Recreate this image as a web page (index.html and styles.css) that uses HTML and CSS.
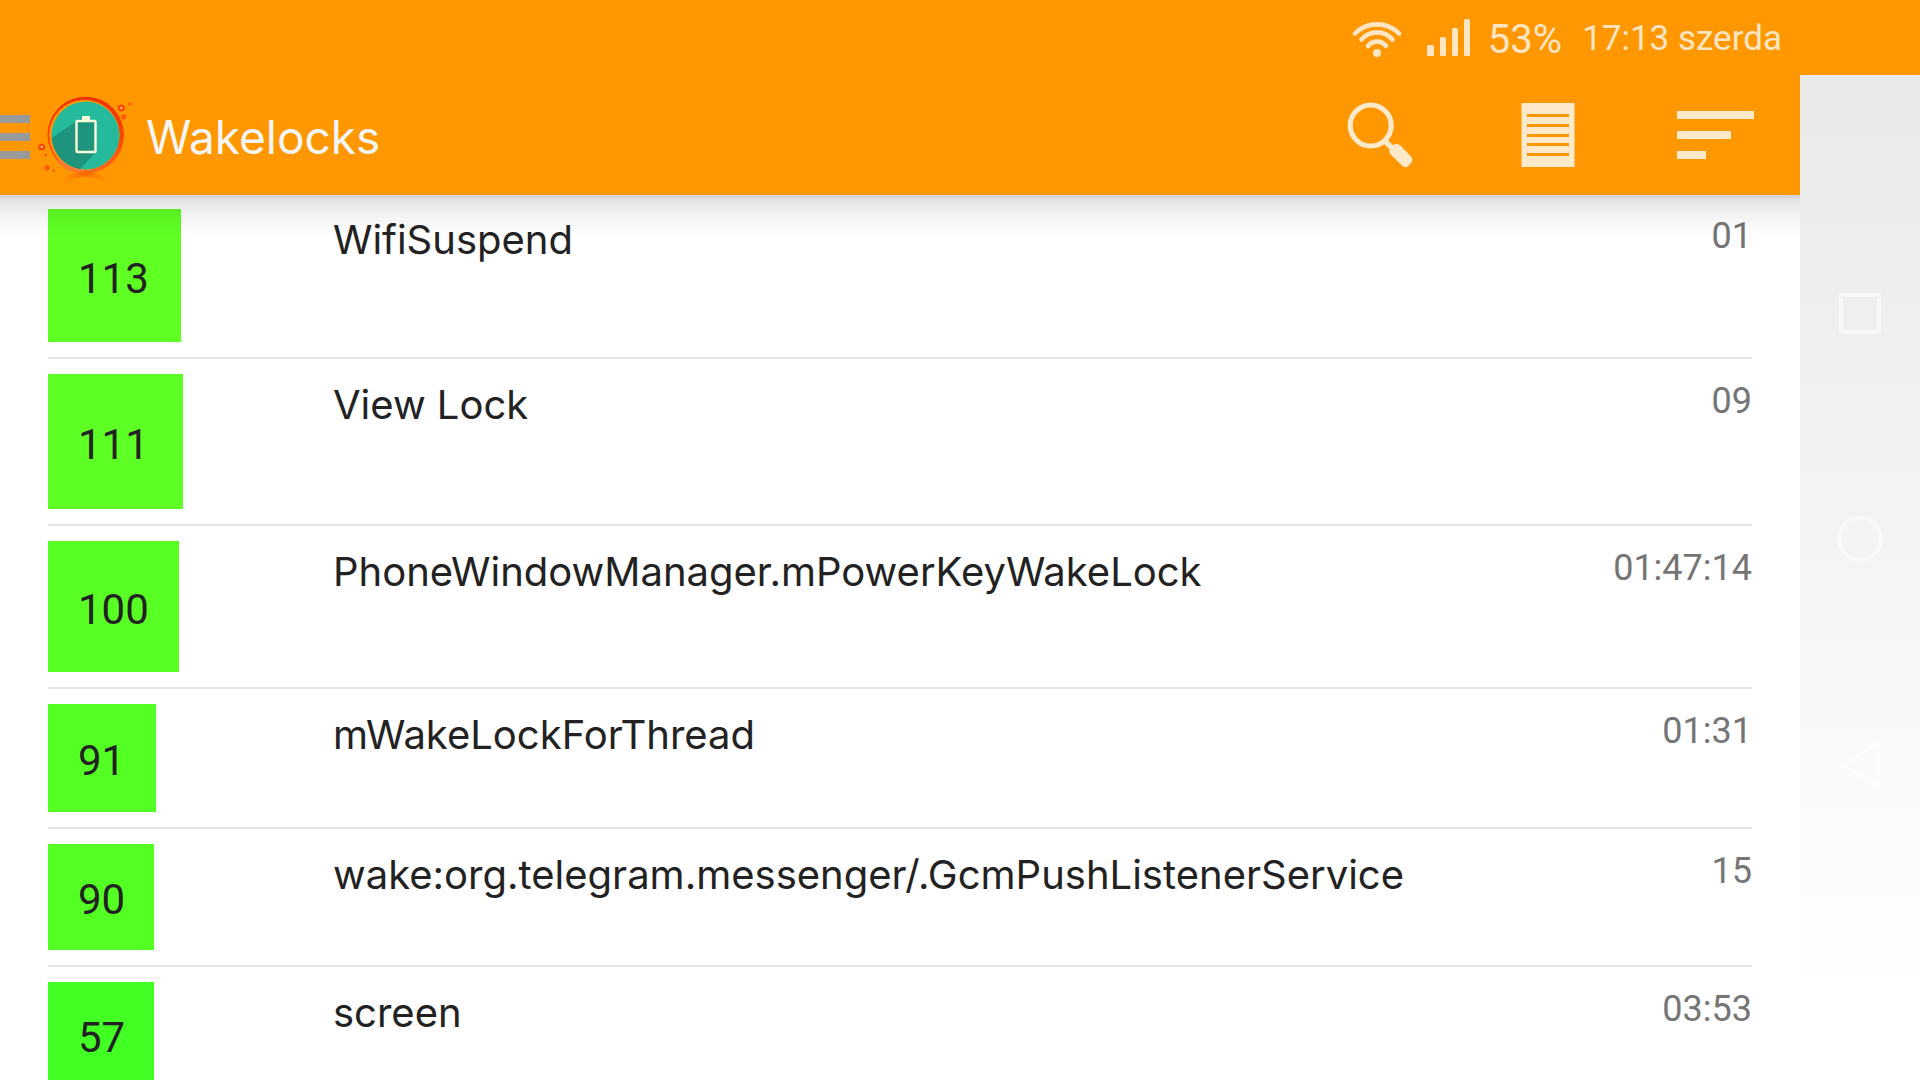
FILE: index.html
```
<!DOCTYPE html>
<html lang="en">
<head>
<meta charset="utf-8">
<meta name="viewport" content="width=device-width, initial-scale=1">
<title>Wakelocks</title>
<link rel="stylesheet" href="styles.css">
</head>
<body class="screen">
  <div class="status">
    <svg class="status-wifi" width="50" height="40" viewBox="0 0 50 40" aria-hidden="true">
      <g fill="none" stroke="currentColor" stroke-width="4.6" stroke-linecap="round">
        <path d="M3 15.500A31 31 0 0 1 47 15.500"/>
        <path d="M9.500 21.500A20.500 20.500 0 0 1 40.500 21.500"/>
        <path d="M16 28A11.500 11.500 0 0 1 34 28"/>
      </g>
      <circle cx="25" cy="35" r="4"/>
    </svg>
    <svg class="status-signal" width="43" height="37" viewBox="0 0 43 37" aria-hidden="true">
      <rect x="0" y="26" width="7" height="11" rx="1.500"/>
      <rect x="13" y="18" width="6" height="19" rx="1.500"/>
      <rect x="25" y="9" width="6" height="28" rx="1.500"/>
      <rect x="37" y="0" width="6" height="37" rx="1.500"/>
    </svg>
    <span class="status-battery">53%</span>
    <span class="status-time">17:13 szerda</span>
  </div>

  <main class="app">
    <header class="toolbar">
      <div class="brand">
        <button class="menu" type="button" aria-label="Menu">
          <svg width="30" height="44" viewBox="0 0 30 44" aria-hidden="true"><path d="M0 0h30v8H0zM0 18h30v8H0zM0 36h30v8H0z"/></svg>
        </button>
        <svg class="logo" width="104" height="94" viewBox="0 0 104 94" aria-hidden="true">
          <defs>
            <clipPath id="disc"><circle cx="49.500" cy="45.500" r="34"/></clipPath>
            <linearGradient id="ring" x1="0" y1="0" x2="0" y2="1">
              <stop offset="0" stop-color="#f03000"/>
              <stop offset=".6" stop-color="#ff4a00"/>
              <stop offset="1" stop-color="#ff6a20"/>
            </linearGradient>
            <linearGradient id="echo">
              <stop offset="0" stop-color="#ff6a00" stop-opacity="0"/>
              <stop offset=".5" stop-color="#ff6a00"/>
              <stop offset="1" stop-color="#ff6a00" stop-opacity="0"/>
            </linearGradient>
          </defs>
          <path fill="url(#ring)" fill-rule="evenodd" d="M49.700 6.700a38.300 38.300 0 1 1 0 76.600a38.300 38.300 0 1 1 0-76.600zM48.500 9.800a35.200 35.200 0 1 0 0 70.400a35.200 35.200 0 1 0 0-70.400z"/>
          <circle cx="49.500" cy="45.500" r="34" fill="#25ba9b"/>
          <path clip-path="url(#disc)" fill="#1d947b" d="M47 27L10 52V90H34L60 62V32z"/>
          <path d="M24 72Q32 80 46 81.500" fill="none" stroke="#ff7a30" stroke-width="4" stroke-linecap="round"/>
          <rect x="40.500" y="31" width="19" height="31" rx="1" fill="none" stroke="#fdfddc" stroke-width="2.400"/>
          <rect x="46" y="26" width="8" height="5" rx="1" fill="#fdfddc"/>
          <path d="M26 92Q49 76 72 92" fill="none" stroke="url(#echo)" stroke-width="5"/>
          <g fill="#ff4a00">
            <circle cx="85.300" cy="18" r="3.500"/><circle cx="87.700" cy="27" r="2.400"/><circle cx="93.700" cy="14" r="1.300"/>
            <circle cx="5.700" cy="57" r="3.500"/><circle cx="11" cy="78" r="2.400"/><circle cx="9.700" cy="65" r="1.200"/><circle cx="17.700" cy="80.700" r="1.300"/>
          </g>
          <g fill="#ffe0d0"><circle cx="85.300" cy="18" r="1"/><circle cx="5.700" cy="57" r="1"/></g>
          <g fill="#ff8a30"><circle cx="87.700" cy="27" r=".8"/><circle cx="11" cy="78" r=".8"/></g>
        </svg>
        <h1 class="title">Wakelocks</h1>
      </div>
      <div class="actions">
        <button class="action" type="button" aria-label="Search">
          <svg width="66" height="66" viewBox="-1 0 66 66" aria-hidden="true">
            <circle cx="22.700" cy="23.500" r="20.500" fill="none" stroke="currentColor" stroke-width="5.200"/>
            <path d="M36.500 38.500L45 47" fill="none" stroke="currentColor" stroke-width="5.500"/>
            <path d="M46 42.500L49 42Q51 42 52.500 43.500L63 54.500Q65.500 57 63.700 60Q60 65.500 57.500 65.300Q56 65.300 54 63.500L42.500 52.500Q41.300 51.300 41.300 48z"/>
          </svg>
        </button>
        <button class="action" type="button" aria-label="Notes">
          <svg width="54" height="66" viewBox="0 0 54 66" aria-hidden="true">
            <path fill-rule="evenodd" d="M.5 1H53.500V65H.5zM6 12V15H48V12zM6 22V25H48V22zM6 32V35H48V32zM6 41V44H48V41zM6 51V54H48V51z"/>
          </svg>
        </button>
        <button class="action" type="button" aria-label="Sort">
          <svg width="78" height="48" viewBox="0 0 78 48" aria-hidden="true"><path d="M0 0h77v8H0zM0 20h54v8H0zM0 40h29v8H0z"/></svg>
        </button>
      </div>
    </header>

    <ul class="list">
      <li class="row"><div class="cell"><span class="count" style="width:133px;height:133px;background:#5fff24">113</span></div><span class="name">WifiSuspend</span><time class="time">01</time></li>
      <li class="row"><div class="cell"><span class="count" style="width:135px;height:135px;background:#5eff24">111</span></div><span class="name">View Lock</span><time class="time">09</time></li>
      <li class="row"><div class="cell"><span class="count" style="width:131px;height:131px;background:#59ff24">100</span></div><span class="name">PhoneWindowManager.mPowerKeyWakeLock</span><time class="time">01:47:14</time></li>
      <li class="row"><div class="cell"><span class="count" style="width:108px;height:108px;background:#54ff24">91</span></div><span class="name">mWakeLockForThread</span><time class="time">01:31</time></li>
      <li class="row"><div class="cell"><span class="count" style="width:106px;height:106px;background:#54ff24">90</span></div><span class="name">wake:org.telegram.messenger/.GcmPushListenerService</span><time class="time">15</time></li>
      <li class="row"><div class="cell"><span class="count" style="width:106px;height:106px;background:#42ff24">57</span></div><span class="name">screen</span><time class="time">03:53</time></li>
    </ul>
  </main>

  <nav class="system" aria-label="System">
    <button class="key" type="button" aria-label="Recent apps">
      <svg width="60" height="60" viewBox="0 0 60 60" aria-hidden="true"><rect x="11" y="12" width="38" height="37" rx="1"/></svg>
    </button>
    <button class="key" type="button" aria-label="Home">
      <svg width="60" height="60" viewBox="0 0 60 60" aria-hidden="true"><circle cx="30" cy="30" r="21"/></svg>
    </button>
    <button class="key" type="button" aria-label="Back">
      <svg width="60" height="60" viewBox="0 0 60 60" aria-hidden="true"><path d="M12 30L48 9V51z"/></svg>
    </button>
  </nav>
</body>
</html>
```
FILE: styles.css
```
* {
  box-sizing: border-box;
}

.screen {
  display: grid;
  grid-template-columns: minmax(0, 1fr) 120px;
  grid-template-rows: auto minmax(0, 1fr);
  height: 100vh;
  margin: 0;
  overflow: hidden;
  background: #fff;
  color: #222;
  font-family: Inter, "Liberation Sans", sans-serif;
}

button {
  display: flex;
  align-items: center;
  justify-content: center;
  padding: 0;
  border: 0;
  background: none;
  color: inherit;
}

svg {
  display: block;
  flex: none;
  fill: currentColor;
}

.status,
.count,
.time {
  font-family: Roboto, "Liberation Sans", sans-serif;
}

/* Status bar */
.status {
  grid-column: 1 / -1;
  display: flex;
  align-items: center;
  justify-content: flex-end;
  height: 75px;
  padding-right: 138px;
  background: #ff9800;
  color: #ffe5c2;
  line-height: 44px;
}

.status-wifi {
  margin-right: 25px;
}

.status-signal {
  margin-right: 18px;
}

.status-battery {
  margin-right: 20px;
  padding-top: 4px;
  font-size: 40px;
}

.status-time {
  padding-top: 2px;
  font-size: 35px;
}

/* App bar */
.app {
  overflow: hidden;
}

.toolbar {
  position: relative;
  z-index: 1;
  display: flex;
  justify-content: space-between;
  height: 120px;
  background: #ff9800;
}

.toolbar::after {
  content: "";
  position: absolute;
  top: 100%;
  left: 0;
  right: 0;
  height: 40px;
  border-top: 3px solid rgba(0, 0, 0, 0.16);
  background: linear-gradient(rgba(0, 0, 0, 0.12), rgba(0, 0, 0, 0.04) 50%, rgba(0, 0, 0, 0)) padding-box;
  pointer-events: none;
}

.brand {
  display: flex;
  align-items: center;
  gap: 6px;
  padding-top: 4px;
}

.menu {
  color: #999;
}

.title {
  margin: 0;
  color: #f5f5f5;
  font-size: 46px;
  font-weight: 400;
  line-height: 56px;
}

.actions {
  display: flex;
  color: #ffe9cb;
}

.action {
  width: 168px;
}

/* Wakelock list */
.list {
  margin: -1px 0 0;
  padding: 0 48px;
  list-style: none;
}

.row {
  display: flex;
  padding: 15px 0;
  border-bottom: 2px solid #e4e4e4;
  line-height: 48px;
}

.cell {
  flex: none;
  width: 285px;
}

.count {
  display: flex;
  align-items: center;
  padding: 6px 0 0 30px;
  font-size: 42px;
}

.name {
  flex: 1;
  padding-top: 7px;
  font-size: 40px;
}

.time {
  padding-top: 3px;
  color: #757575;
  font-size: 36px;
}

/* System keys */
.system {
  display: flex;
  flex-direction: column;
  align-items: center;
  justify-content: center;
  gap: 166px;
  padding-bottom: 77px;
  background: linear-gradient(#e9e9e9, #f5f5f5 50%, #fff 92%);
}

.key {
  color: rgba(255, 255, 255, 0.55);
}

.key svg {
  fill: none;
  stroke: currentColor;
  stroke-width: 4;
  stroke-linejoin: round;
}
```
